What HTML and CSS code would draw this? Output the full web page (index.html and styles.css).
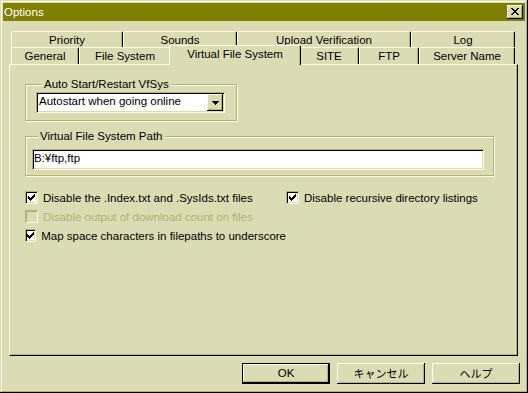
FILE: index.html
```html
<!DOCTYPE html>
<html lang="en">
<head>
<meta charset="utf-8">
<title>Options</title>
<link rel="stylesheet" href="styles.css">
</head>
<body>
<div class="window">
  <div class="titlebar">
    <span class="title">Options</span>
    <span class="close-btn"><svg width="8" height="7" viewBox="0 0 8 7" shape-rendering="crispEdges"><path fill="#000" d="M0 0h2v1H0z M6 0h2v1H6z M1 1h2v1H1z M5 1h2v1H5z M2 2h4v1H2z M3 3h2v1H3z M2 4h4v1H2z M1 5h2v1H1z M5 5h2v1H5z M0 6h2v1H0z M6 6h2v1H6z"/></svg></span>
  </div>
  <div class="content">
    <div class="tabs">
      <div class="tabrow back">
        <div class="tab t-priority">Priority</div>
        <div class="tab t-sounds">Sounds</div>
        <div class="tab t-upload">Upload Verification</div>
        <div class="tab t-log">Log</div>
      </div>
      <div class="tabrow front">
        <div class="tab t-general">General</div>
        <div class="tab t-filesys">File System</div>
        <div class="tab t-vfs selected">Virtual File System</div>
        <div class="tab t-site">SITE</div>
        <div class="tab t-ftp">FTP</div>
        <div class="tab t-server">Server Name</div>
      </div>
    </div>
    <div class="panel">
      <fieldset class="group group-auto">
        <legend>Auto Start/Restart VfSys</legend>
        <div class="combo">
          <span class="combo-text">Autostart when going online</span>
          <span class="combo-btn"><svg width="7" height="4" viewBox="0 0 7 4" shape-rendering="crispEdges"><path fill="#000" d="M0 0h7v1H0z M1 1h5v1H1z M2 2h3v1H2z M3 3h1v1H3z"/></svg></span>
        </div>
      </fieldset>
      <fieldset class="group group-path">
        <legend>Virtual File System Path</legend>
        <div class="textbox">B:¥ftp,ftp</div>
      </fieldset>
      <div class="checks">
        <div class="check">
          <span class="box"><svg width="7" height="7" viewBox="0 0 7 7" shape-rendering="crispEdges"><path fill="#000" d="M0 2h1v3H0z M1 3h1v3H1z M2 4h1v3H2z M3 3h1v3H3z M4 2h1v3H4z M5 1h1v3H5z M6 0h1v3H6z"/></svg></span>
          <span>Disable the .Index.txt and .SysIds.txt files</span>
        </div>
        <div class="check">
          <span class="box"><svg width="7" height="7" viewBox="0 0 7 7" shape-rendering="crispEdges"><path fill="#000" d="M0 2h1v3H0z M1 3h1v3H1z M2 4h1v3H2z M3 3h1v3H3z M4 2h1v3H4z M5 1h1v3H5z M6 0h1v3H6z"/></svg></span>
          <span>Disable recursive directory listings</span>
        </div>
        <div class="check disabled">
          <span class="box"></span>
          <span>Disable output of download count on files</span>
        </div>
        <div class="check-empty"></div>
        <div class="check">
          <span class="box"><svg width="7" height="7" viewBox="0 0 7 7" shape-rendering="crispEdges"><path fill="#000" d="M0 2h1v3H0z M1 3h1v3H1z M2 4h1v3H2z M3 3h1v3H3z M4 2h1v3H4z M5 1h1v3H5z M6 0h1v3H6z"/></svg></span>
          <span>Map space characters in filepaths to underscore</span>
        </div>
      </div>
    </div>
    <div class="buttons">
      <div class="btn default">OK</div>
      <div class="btn"><span class="jp">キャンセル</span></div>
      <div class="btn"><span class="jp">ヘルプ</span></div>
    </div>
  </div>
</div>
</body>
</html>
```

FILE: styles.css
```css
:root {
  --face: #dcdcb4;
  --hl: #fcfce8;
  --sh: #b4b470;
  --dk: #000000;
  --title: #808000;
  --disabled: #b0b070;
}

* { box-sizing: border-box; }

html, body {
  margin: 0;
  padding: 0;
}

body {
  width: 528px;
  height: 393px;
  overflow: hidden;
  background: var(--face);
  font-family: "Liberation Sans", "Noto Sans CJK JP", sans-serif;
  font-size: 11.5px;
  color: #000;
}

.window {
  width: 528px;
  height: 393px;
  padding: 3px;
  background: var(--face);
  display: flex;
  flex-direction: column;
  box-shadow:
    inset -1px -1px 0 var(--dk),
    inset 1px 1px 0 var(--face),
    inset -2px -2px 0 var(--sh),
    inset 2px 2px 0 var(--hl);
}

/* Title bar */
.titlebar {
  height: 18px;
  background: var(--title);
  color: #fff;
  display: flex;
  align-items: center;
  justify-content: space-between;
  padding-left: 1px;
  padding-right: 2px;
}

.title {
  font-size: 11.5px;
  line-height: 18px;
}

.close-btn {
  width: 16px;
  height: 14px;
  background: var(--face);
  display: flex;
  align-items: center;
  justify-content: center;
  padding-right: 1px;
  padding-bottom: 1px;
  box-shadow:
    inset -1px -1px 0 var(--dk),
    inset 1px 1px 0 var(--hl),
    inset -2px -2px 0 var(--sh);
}

/* Content area */
.content {
  flex: 1;
  display: flex;
  flex-direction: column;
  padding: 10px 7px 0 6px;
}

/* Tabs */
.tabs {
  margin: 0 3px 0 2px;
  display: flex;
  flex-direction: column;
}

.tabrow {
  display: flex;
}

.tabrow.back { height: 16px; }
.tabrow.front { height: 17px; }

.tab {
  flex: none;
  height: 100%;
  border-left: 1px solid var(--hl);
  border-top: 1px solid var(--hl);
  border-right: 1px solid var(--dk);
  border-radius: 2px 2px 0 0;
  box-shadow: inset -1px 0 0 var(--sh);
  background: var(--face);
  text-align: center;
  line-height: 12px;
  padding-top: 2px;
  white-space: nowrap;
}

.t-priority { width: 112px; }
.t-sounds { width: 114px; }
.t-upload { width: 174px; }
.t-log { width: 104px; }

.t-general { width: 68px; }
.t-filesys { width: 92px; }
.t-vfs { width: 132px; }
.t-site { width: 60px; }
.t-ftp { width: 60px; }
.t-server { width: 96px; }

.tab.selected {
  position: relative;
  z-index: 1;
  height: 20px;
  margin: -2px -2px 0 -2px;
}

/* Panel */
.panel {
  height: 292px;
  border-left: 1px solid var(--hl);
  border-top: 1px solid var(--hl);
  border-right: 1px solid var(--dk);
  border-bottom: 1px solid var(--dk);
  box-shadow: inset -1px -1px 0 var(--sh);
  padding: 13px 0 0 15px;
  display: flex;
  flex-direction: column;
  align-items: flex-start;
}

/* Group boxes */
.group {
  margin: 0;
  min-width: 0;
  border: 1px solid var(--sh);
  box-shadow: 1px 1px 0 var(--hl), inset 1px 1px 0 var(--hl);
}

.group legend {
  margin-left: 6px;
  padding: 0 2px;
  line-height: 13px;
  background: var(--face);
}

.group-auto {
  width: 212px;
  padding: 1px 0 7px 10px;
}

.group-path {
  width: 469px;
  margin-top: 9px;
  padding: 6px 0 5px 6px;
}

/* Sunken fields */
.combo,
.textbox {
  height: 21px;
  background: #fff;
  padding: 2px;
  box-shadow:
    inset 1px 1px 0 var(--sh),
    inset -1px -1px 0 var(--hl),
    inset 2px 2px 0 var(--dk),
    inset -2px -2px 0 var(--face);
}

.combo {
  width: 189px;
  display: flex;
  justify-content: space-between;
}

.combo-text {
  padding-left: 1px;
  line-height: 15px;
}

.combo-btn {
  width: 16px;
  height: 17px;
  background: var(--face);
  display: flex;
  align-items: center;
  justify-content: center;
  box-shadow:
    inset -1px -1px 0 var(--dk),
    inset 1px 1px 0 var(--hl),
    inset -2px -2px 0 var(--sh);
}

.textbox {
  width: 452px;
  line-height: 15px;
}

/* Checkboxes */
.checks {
  margin-top: 12px;
  display: grid;
  grid-template-columns: 261px auto;
  grid-auto-rows: 19px;
}

.check {
  display: flex;
  align-items: center;
  gap: 5px;
  white-space: nowrap;
}

.box {
  width: 13px;
  height: 13px;
  background: #fff;
  display: flex;
  align-items: center;
  justify-content: center;
  box-shadow:
    inset 1px 1px 0 var(--sh),
    inset -1px -1px 0 var(--hl),
    inset 2px 2px 0 var(--dk),
    inset -2px -2px 0 var(--face);
}

.check.disabled {
  color: var(--disabled);
}

.check.disabled .box {
  background: var(--face);
  box-shadow:
    inset 1px 1px 0 var(--sh),
    inset -1px -1px 0 var(--hl),
    inset 2px 2px 0 var(--sh),
    inset -2px -2px 0 var(--face);
}

/* Buttons */
.buttons {
  margin-top: 7px;
  margin-right: -2px;
  display: flex;
  justify-content: flex-end;
  gap: 7px;
}

.btn {
  width: 88px;
  height: 21px;
  display: flex;
  align-items: center;
  justify-content: center;
  line-height: 13px;
  box-shadow:
    inset -1px -1px 0 var(--dk),
    inset 1px 1px 0 var(--hl),
    inset -2px -2px 0 var(--sh);
}

.btn.default {
  box-shadow:
    inset 0 0 0 1px var(--dk),
    inset -2px -2px 0 var(--dk),
    inset 2px 2px 0 var(--hl),
    inset -3px -3px 0 var(--sh);
}

.jp {
  font-family: "Noto Sans CJK JP", sans-serif;
  font-size: 11px;
}
```
